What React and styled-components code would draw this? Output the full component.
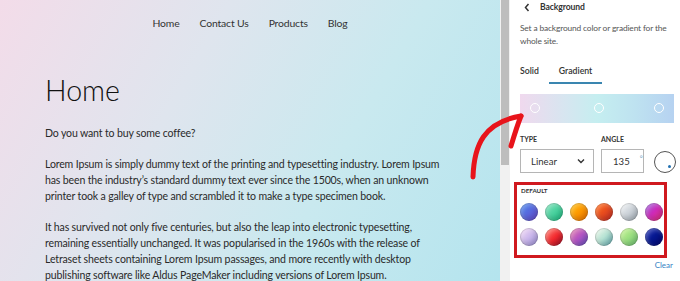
import React from "react";
import styled, { createGlobalStyle } from "styled-components";

const GlobalStyle = createGlobalStyle`
  html, body {
    margin: 0;
    padding: 0;
    background: #ffffff;
  }
  body {
    font-family: "Lato", "Noto Sans", sans-serif;
    color: #222;
    overflow: hidden;
  }
`;

const Screen = styled.div`
  display: flex;
  width: 680px;
  height: 281px;
  position: relative;
  overflow: hidden;
`;

const Site = styled.div`
  width: 500px;
  flex: none;
  background: linear-gradient(120deg, #f3dce9 0%, #dfe5ee 35%, #c9e9ef 65%, #b4e4ee 100%);
  padding: 16px 0 0 45px;
  box-sizing: border-box;
`;

const Nav = styled.nav`
  display: flex;
  justify-content: center;
  gap: 20px;
  margin-left: -45px;
  font-size: 10.4px;
  letter-spacing: -0.15px;
  color: #333;
`;

const NavLink = styled.span`
  line-height: 14px;
`;

const Title = styled.h1`
  margin: 40px 0 0;
  font-size: 28.6px;
  font-weight: 300;
  line-height: 40px;
  color: #111;
`;

const Text = styled.p`
  margin: 15px 0 0;
  font-size: 10.55px;
  letter-spacing: -0.15px;
  line-height: 16px;
  color: #2a2a2a;
  white-space: nowrap;
`;

const Scrollbar = styled.div`
  width: 10px;
  flex: none;
  background: #f1f1f1;
`;

const Thumb = styled.div`
  height: 165px;
  background: #bdbdbd;
  margin-left: 1px;
  width: 8px;
`;

const Panel = styled.div`
  flex: 1;
  background: #fff;
  padding: 0 6px 0 10px;
  display: flex;
  flex-direction: column;
`;

const Header = styled.div`
  display: flex;
  align-items: center;
  gap: 10px;
  height: 14px;
  padding-left: 4px;
  font-size: 8.6px;
  font-weight: 700;
  letter-spacing: -0.1px;
  color: #333;
`;

const Desc = styled.div`
  margin-top: 8px;
  font-size: 8.4px;
  letter-spacing: -0.15px;
  line-height: 13px;
  color: #555;
`;

const Tabs = styled.div`
  display: flex;
  margin-top: 12px;
  height: 24px;
`;

const Tab = styled.div`
  font-size: 8.7px;
  font-weight: 600;
  color: #333;
  padding: 0 10px 4px;
  padding-left: ${(p) => (p.$first ? "0" : "10px")};
  display: flex;
  align-items: center;
  ${(p) => p.$active && `box-shadow: inset 0 -2px 0 #3a86b0;`}
`;

const Preview = styled.div`
  margin-top: 10px;
  height: 29px;
  width: 154px;
  background: linear-gradient(90deg, #f0d9ee 0%, #d6e6f0 30%, #c5eef0 50%, #bee2f0 75%, #b6d2f1 100%);
  position: relative;
`;

const Handle = styled.span`
  position: absolute;
  top: 9px;
  width: 8px;
  height: 8px;
  border: 1.5px solid #fff;
  border-radius: 50%;
  transform: translateX(-50%);
`;

const Controls = styled.div`
  display: flex;
  align-items: flex-end;
  margin-top: 12px;
  gap: 7px;
`;

const Field = styled.div`
  display: flex;
  flex-direction: column;
  gap: 5px;
`;

const Label = styled.div`
  font-size: 7px;
  font-weight: 700;
  text-transform: uppercase;
  color: #333;
  line-height: 9px;
`;

const Select = styled.div`
  width: 74px;
  height: 24px;
  box-sizing: border-box;
  border: 1px solid #b5b5b5;
  display: flex;
  align-items: center;
  justify-content: space-between;
  padding: 0 8px 0 10px;
  font-size: 9.6px;
  color: #333;
`;

const AngleInput = styled.div`
  width: 43px;
  height: 24px;
  box-sizing: border-box;
  border: 1px solid #b5b5b5;
  display: flex;
  align-items: center;
  padding: 0 0 0 11px;
  gap: 10px;
  font-size: 9.6px;
  color: #333;
`;

const Degree = styled.span`
  font-size: 7px;
  color: #6a9cc0;
  margin-top: -7px;
`;

const Dial = styled.div`
  width: 20px;
  height: 20px;
  border: 1px solid #555;
  border-radius: 50%;
  margin-left: 3px;
  position: relative;
`;

const DialDot = styled.span`
  position: absolute;
  right: 4px;
  bottom: 4px;
  width: 3px;
  height: 3px;
  border-radius: 50%;
  background: #2271b1;
`;

const Palette = styled.div`
  margin-top: 14px;
  position: relative;
`;

const PaletteLabel = styled(Label)`
  font-size: 6.2px;
  line-height: 8px;
  margin-left: 1px;
`;

const Swatches = styled.div`
  display: grid;
  grid-template-columns: repeat(6, 18px);
  gap: 7px;
  margin-top: 8px;
`;

const Swatch = styled.span`
  width: 18px;
  height: 18px;
  border-radius: 50%;
  background: ${(p) => p.$bg};
  box-shadow: inset 0 0 0 1px rgba(0, 0, 0, 0.12), inset -2px -3px 5px rgba(0, 0, 0, 0.18),
    inset 2px 2px 4px rgba(255, 255, 255, 0.3);
`;

const Highlight = styled.div`
  position: absolute;
  left: -6px;
  top: -5px;
  width: 153px;
  height: 76px;
  border: 3px solid #d0191f;
  box-sizing: border-box;
  pointer-events: none;
`;

const Clear = styled.div`
  align-self: flex-end;
  margin-top: 14px;
  margin-right: 3px;
  font-size: 8px;
  line-height: 10px;
  color: #3582c4;
`;

const Arrow = styled.svg`
  position: absolute;
  left: 0;
  top: 0;
  pointer-events: none;
`;

const swatches = [
  "linear-gradient(135deg, #3f82e6 0%, #7050d8 100%)",
  "linear-gradient(135deg, #7adcb4 0%, #1fc98c 100%)",
  "linear-gradient(135deg, #fcb900 0%, #ff7a00 100%)",
  "linear-gradient(135deg, #ff6a10 0%, #d2302c 100%)",
  "linear-gradient(135deg, #eef0f2 0%, #aeb9c3 100%)",
  "linear-gradient(135deg, #8e5ad8 0%, #cf2aba 50%, #f03a7a 100%)",
  "linear-gradient(135deg, #f2d6f2 0%, #a89ce8 100%)",
  "linear-gradient(135deg, #fe7a6a 0%, #f2282e 55%, #a8102c 100%)",
  "linear-gradient(135deg, #e47aa0 0%, #b654c4 50%, #6a5ad0 100%)",
  "linear-gradient(135deg, #eef6e8 0%, #b6e3d4 50%, #6ab7bf 100%)",
  "linear-gradient(135deg, #c4f288 0%, #76cf7c 100%)",
  "linear-gradient(135deg, #1a2ab0 0%, #061890 50%, #02067a 100%)",
];

export default function App() {
  return (
    <>
      <GlobalStyle />
      <Screen>
        <Site>
          <Nav>
            <NavLink>Home</NavLink>
            <NavLink>Contact Us</NavLink>
            <NavLink>Products</NavLink>
            <NavLink>Blog</NavLink>
          </Nav>
          <Title>Home</Title>
          <Text>Do you want to buy some coffee?</Text>
          <Text>
            Lorem Ipsum is simply dummy text of the printing and typesetting industry. Lorem Ipsum
            <br />
            has been the industry’s standard dummy text ever since the 1500s, when an unknown
            <br />
            printer took a galley of type and scrambled it to make a type specimen book.
          </Text>
          <Text>
            It has survived not only five centuries, but also the leap into electronic typesetting,
            <br />
            remaining essentially unchanged. It was popularised in the 1960s with the release of
            <br />
            Letraset sheets containing Lorem Ipsum passages, and more recently with desktop
            <br />
            publishing software like Aldus PageMaker including versions of Lorem Ipsum.
          </Text>
        </Site>
        <Scrollbar>
          <Thumb />
        </Scrollbar>
        <Panel>
          <Header>
            <svg width="6" height="9" viewBox="0 0 6 9">
              <path d="M4.5 1 L1.5 4.5 L4.5 8" fill="none" stroke="#333" strokeWidth="1.5" />
            </svg>
            Background
          </Header>
          <Desc>Set a background color or gradient for the whole site.</Desc>
          <Tabs>
            <Tab $first>Solid</Tab>
            <Tab $active>Gradient</Tab>
          </Tabs>
          <Preview>
            <Handle style={{ left: "10%" }} />
            <Handle style={{ left: "51%" }} />
            <Handle style={{ left: "90%" }} />
          </Preview>
          <Controls>
            <Field>
              <Label>Type</Label>
              <Select>
                Linear
                <svg width="8" height="6" viewBox="0 0 8 6">
                  <path d="M1 1.5 L4 4.5 L7 1.5" fill="none" stroke="#333" strokeWidth="1.4" />
                </svg>
              </Select>
            </Field>
            <Field>
              <Label>Angle</Label>
              <AngleInput>
                135
                <Degree>°</Degree>
              </AngleInput>
            </Field>
            <Dial>
              <DialDot />
            </Dial>
          </Controls>
          <Palette>
            <PaletteLabel>Default</PaletteLabel>
            <Swatches>
              {swatches.map((bg, i) => (
                <Swatch key={i} $bg={bg} />
              ))}
            </Swatches>
            <Highlight />
          </Palette>
          <Clear>Clear</Clear>
        </Panel>
        <Arrow width="680" height="281" viewBox="0 0 680 281">
          <path
            d="M473 177 C474 145 484 122 521 116"
            fill="none"
            stroke="#e8141b"
            strokeWidth="5"
            strokeLinecap="round"
          />
          <path
            d="M521 116 C517 126 514 136 511 146"
            fill="none"
            stroke="#e8141b"
            strokeWidth="5"
            strokeLinecap="round"
          />
        </Arrow>
      </Screen>
    </>
  );
}
